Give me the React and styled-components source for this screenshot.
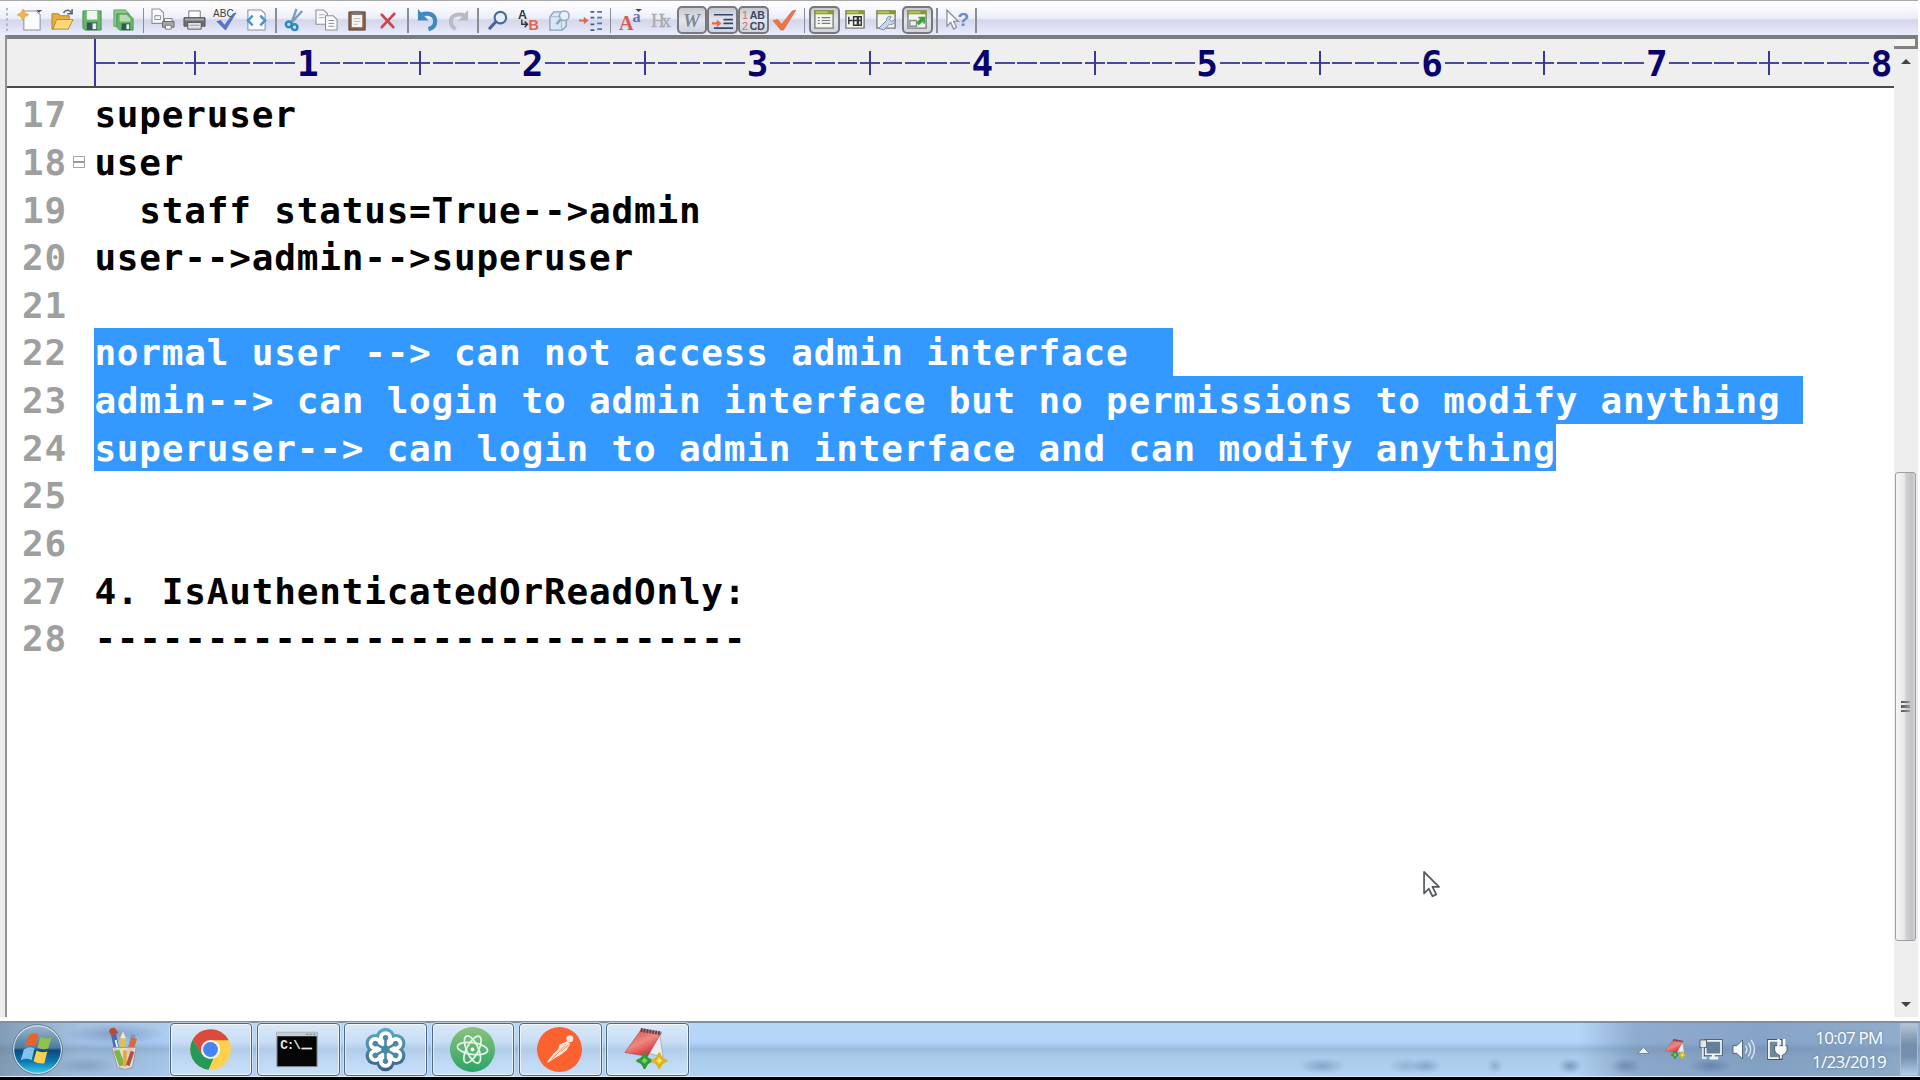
import React from "react";
import styled, { createGlobalStyle, css } from "styled-components";

const MONO = '"DejaVu Sans Mono", "Liberation Mono", monospace';
const CELL = 22.49;
const ROW = 47.67;

const GlobalStyle = createGlobalStyle`
  * { box-sizing: border-box; }
  html, body { margin: 0; padding: 0; overflow: hidden; background: #fff; }
`;

const Screen = styled.div`
  width: 1920px;
  height: 1080px;
  display: flex;
  flex-direction: column;
  background: #fff;
  overflow: hidden;
  cursor: default;
`;

/* ---------- toolbar ---------- */

const Toolbar = styled.div`
  flex: none;
  height: 35px;
  width: 1918px;
  display: flex;
  align-items: center;
  padding: 4px 0 0 5px;
  border-top: 1px solid #a9a9a9;
  background: linear-gradient(#fdfdfe 0, #fbfbfe 15%, #eceffa 50%, #d3d7e9 56%, #dadef0 72%, #e9ecfa 100%);
`;

const Grip = styled.div`
  width: 4px;
  height: 26px;
  margin-right: 6.6px;
  background: radial-gradient(circle at 2px 2px, #b4b6c2 1.1px, transparent 1.5px) 0 0 / 4px 5.2px;
`;

const ToolButton = styled.div`
  width: 30.96px;
  height: 28px;
  flex: none;
  display: flex;
  align-items: center;
  justify-content: center;
  border-radius: 5px;
  ${(p) =>
    p.$pressed &&
    css`
      border: 2px solid #77797f;
      background: linear-gradient(#c7c9d1, #e3e5ee 50%, #d0d3df);
    `}
  svg { width: 23px; height: 23px; flex: none; overflow: visible; }
`;

const ToolSeparator = styled.div`
  flex: none;
  width: 1.6px;
  height: 25px;
  margin: 0 3.4px;
  background: #8c8e96;
`;

/* ---------- editor ---------- */

const Editor = styled.div`
  flex: none;
  height: 982px;
  display: flex;
`;

const LeftEdge = styled.div`
  width: 7px;
  flex: none;
  border-right: 2.4px solid #929292;
  background: #ededed;
`;

const Document = styled.div`
  width: 1887px;
  flex: none;
  display: flex;
  flex-direction: column;
  border-top: 4px solid #7c7c7c;
`;

const Ruler = styled.div`
  flex: none;
  height: 49px;
  display: flex;
  align-items: stretch;
  background: #efefef;
  border-bottom: 2px solid #4b4b4b;
  overflow: hidden;
`;

const RulerMargin = styled.div`
  width: 86.6px;
  flex: none;
`;

const RulerScale = styled.div`
  display: flex;
  border-left: 2px solid #3a389c;
`;

const RulerCell = styled.div`
  width: ${CELL}px;
  flex: none;
  display: flex;
  align-items: center;
  justify-content: center;
  margin-left: ${(p) => (p.$first ? "-1.4px" : "0")};
  font: bold 36px/47px ${MONO};
  color: #08006c;
`;

const Digit = styled.span`
  padding-top: 2px;
`;

const Dash = styled.div`
  width: 19.8px;
  height: 2px;
  margin-top: 1px;
  display: flex;
  justify-content: center;
  align-items: center;
  background: #4a48a0;
`;

const Tick = styled.div`
  width: 2px;
  height: 24px;
  flex: none;
  background: #3a389c;
`;

const Lines = styled.div`
  padding-top: 2.2px;
`;

const Line = styled.div`
  height: ${ROW}px;
  display: flex;
  align-items: stretch;
  font: bold 36px/50px ${MONO};
  letter-spacing: 0.807px;
  white-space: pre;
  color: #000;
`;

const LineNumber = styled.div`
  width: 63px;
  flex: none;
  padding-left: 15px;
  color: #9f9f9f;
`;

const FoldSlot = styled.div`
  width: 24.4px;
  flex: none;
  padding: 18px 0 0 2.5px;
`;

const FoldBox = styled.div`
  width: 12.5px;
  height: 12.5px;
  border: 1.3px solid #a5a5a5;
  display: flex;
  align-items: center;
  &::before { content: ""; width: 100%; height: 1.3px; background: #999; }
`;

const Code = styled.div`
  ${(p) => p.$selected && css`background: #3399ff; color: #fff;`}
`;

/* ---------- scrollbar ---------- */

const Scrollbar = styled.div`
  width: 24px;
  flex: none;
  display: flex;
  flex-direction: column;
  align-items: center;
  background: #eeeeee;
`;

const SplitHandle = styled.div`
  width: 24px;
  height: 14px;
  flex: none;
  border-top: 4px solid #7c7c7c;
  border-right: 3px solid #828282;
  border-bottom: 3px solid #828282;
  background: #f4f4f4;
`;

const Arrow = styled.div`
  flex: none;
  width: 0;
  height: 0;
  border-left: 5px solid transparent;
  border-right: 5px solid transparent;
  ${(p) => (p.$down ? "border-top: 5px solid #444; margin-top: auto; margin-bottom: 10px;" : "border-bottom: 5px solid #444; margin-top: 10px;")}
`;

const Thumb = styled.div`
  width: 21px;
  height: 469px;
  margin: 408px 2px 0 0;
  flex: none;
  display: flex;
  flex-direction: column;
  align-items: center;
  justify-content: center;
  gap: 2px;
  border: 1.5px solid #a0a0a2;
  border-radius: 3px;
  background: linear-gradient(90deg, #f6f6f6, #e9e9ea 42%, #cfcfd2 55%, #c3c3c7 85%, #d5d5d8);
`;

const GripLine = styled.div`
  width: 9px;
  height: 2.4px;
  background: linear-gradient(90deg, #555, #999);
`;

/* ---------- taskbar ---------- */

const smudge = (x, w, a) => `radial-gradient(ellipse ${w}px 8px at ${x}px 43px, rgba(50,75,120,${a}), transparent)`;

const Taskbar = styled.div`
  flex: none;
  height: 56px;
  margin-top: 4px;
  display: flex;
  align-items: stretch;
  border-top: 2px solid #7f90a5;
  border-bottom: 1px solid #dcebf8;
  background:
    ${smudge(1322, 24, 0.32)}, ${smudge(1426, 15, 0.32)}, ${smudge(1406, 18, 0.22)}, ${smudge(1495, 8, 0.25)},
    ${smudge(1570, 12, 0.4)}, ${smudge(1625, 15, 0.35)}, ${smudge(1711, 22, 0.35)},
    radial-gradient(ellipse 50px 10px at 115px 11px, rgba(60,85,125,0.3), transparent),
    radial-gradient(ellipse 30px 9px at 86px 43px, rgba(60,85,125,0.25), transparent),
    linear-gradient(90deg, rgba(80,100,115,.5) 0, rgba(80,100,130,.18) 80px, rgba(80,110,150,.16) 140px, transparent 200px, transparent 1578px, rgba(83,110,145,.4) 1635px, rgba(88,115,152,.5) 1760px, rgba(100,125,150,.45) 1920px),
    linear-gradient(#b8d6f5 0, #b4d5fb 36%, #9cbcde 49%, #abcaea 62%, #b1d2f3 100%);
`;

const BottomEdge = styled.div`
  flex: none;
  height: 3px;
  background: #000;
`;

const StartSlot = styled.div`
  width: 75px;
  flex: none;
  display: flex;
  align-items: center;
  justify-content: center;
  svg { width: 51px; height: 51px; }
`;

const PinnedSlot = styled.div`
  width: 94.8px;
  flex: none;
  display: flex;
  align-items: center;
  justify-content: center;
  padding: 0 0 2px 3px;
  svg { width: 32px; height: 45px; overflow: visible; }
`;

const TaskList = styled.div`
  display: flex;
  gap: 4.7px;
`;

const TaskButton = styled.div`
  width: 82.6px;
  display: flex;
  align-items: center;
  justify-content: center;
  padding-right: 1px;
  border: 1.6px solid #4f6780;
  border-radius: 4px;
  background: linear-gradient(#dae9f8 0, #c8ddf5 35%, #b1cce9 50%, #bcd6f2 68%, #c8e0fa);
  box-shadow: inset 0 0 0 1px rgba(255, 255, 255, 0.65), 0 0 0 1px rgba(225, 238, 250, 0.6);
  svg { width: 47px; height: 47px; overflow: visible; }
`;

const Tray = styled.div`
  margin-left: auto;
  display: flex;
  align-items: center;
`;

const TrayIcon = styled.div`
  width: 33.5px;
  display: flex;
  justify-content: center;
  svg { width: 23px; height: 23px; overflow: visible; }
`;

const Clock = styled.div`
  width: 106px;
  padding: 1px 0 0 4px;
  text-align: center;
  font: 17px/24px "Open Sans", "Noto Sans", sans-serif;
  letter-spacing: -0.75px;
  color: #fff;
  text-shadow: 0 0 3px rgba(60, 85, 120, 0.5);
`;

const ShowDesktop = styled.div`
  width: 18px;
  align-self: stretch;
  margin-right: 2px;
  border: 1.5px solid #a9bed5;
  background: linear-gradient(#b4c5d8, #768ea9 40%, #7690b0 65%, #b4cdea);
`;

const Pointer = styled.svg`
  position: absolute;
  left: 1422px;
  top: 870px;
  width: 21px;
  height: 30px;
`;

/* ---------- toolbar drawings ---------- */

const Sheet = ({ x = 4, y = 2, w = 16, h = 20, fold = 4 }) => (
  <path d={`M${x} ${y}h${w - fold}l${fold} ${fold}v${h - fold}h${-w}z`} fill="#fafbfd" stroke="#8d9199" strokeWidth="1.1" />
);

const Floppy = ({ x = 0, y = 0, s = 1 }) => (
  <g transform={`translate(${x} ${y}) scale(${s})`}>
    <path d="M2 2h19v20H4l-2-2z" fill="#68b56a" stroke="#4a9558" />
    <path d="M6 2h11v9H6z" fill="#eef6ee" />
    <path d="M6 14h11v8H6z" fill="#2d5a54" />
    <path d="M12 15h4v6h-4z" fill="#e4efe6" />
  </g>
);

const WindowFrame = ({ children }) => (
  <g>
    <path d="M2 2h19v18H2z" fill="#f4f5f1" stroke="#787c76" strokeWidth="1.4" />
    <path d="M1.5 1.5h20v4h-20z" fill="#8c9a2d" />
    <path d="M3 2.4h12v2H3z" fill="#b9c556" />
    {children}
  </g>
);

const icons = {
  fresh: (
    <svg viewBox="0 0 24 24">
      <Sheet x={4} y={2} w={17} h={20} />
      <path d="M17 1h6l-3 3z" fill="#55585f" />
      <path d="M3 0l2 4 4 2-4 2-2 4-2-4-4-2 4-2z" fill="#f6b24a" stroke="#eea12c" strokeWidth=".8" />
    </svg>
  ),
  open: (
    <svg viewBox="0 0 24 24">
      <path d="M1 5h7l2 2h9v5H6L2 21H1z" fill="#e7ae3e" stroke="#a9823e" />
      <path d="M6 11h17l-5 10H2z" fill="#ffd778" stroke="#b98b32" />
      <path d="M13 4c3-4 7-3 8 0M22 0v5h-5" fill="none" stroke="#586577" strokeWidth="1.6" />
    </svg>
  ),
  save: <svg viewBox="0 0 24 24"><Floppy /></svg>,
  saveAll: (
    <svg viewBox="0 0 24 24">
      <path d="M2 1h12l4 4v13H2z" fill="#8acb88" stroke="#5ea564" />
      <path d="M5 5h12l5 5v12H8l-3-3z" fill="#68b56a" stroke="#4a9558" />
      <path d="M8 6h7l4 4v3H8z" fill="#b5dcb3" />
      <path d="M10 15h9v7h-9z" fill="#2d5a54" />
      <path d="M15 16h3v5h-3z" fill="#e4efe6" />
    </svg>
  ),
  preview: (
    <svg viewBox="0 0 24 24">
      <Sheet x={0} y={0} w={12} h={15} />
      <path d="M3 7h6v4H3z" fill="none" stroke="#888" />
      <path d="M13 10h8v4h-8z" fill="#fff" stroke="#777" />
      <path d="M11 13h12v6H11z" fill="#a3a6ac" stroke="#66696e" />
      <path d="M14 17h6v4h-6z" fill="#fff" stroke="#777" />
    </svg>
  ),
  print: (
    <svg viewBox="0 0 24 24">
      <path d="M6 2h12v8H6z" fill="#fafafa" stroke="#777" />
      <path d="M1 9h22v9H1z" fill="#6a6d72" stroke="#55585c" />
      <path d="M2 10h20v2H2z" fill="#a8abb0" />
      <path d="M5 14h14v7H5z" fill="#dfe1e6" stroke="#555" />
      <path d="M7 17h10" stroke="#999" />
    </svg>
  ),
  spell: (
    <svg viewBox="0 0 24 24">
      <text x="-1" y="8" fontFamily="Liberation Sans, sans-serif" fontSize="10.500" fill="#3c3c44">ABC</text>
      <path d="M3 13l4-1 4 5L20 5l3-1-11 18z" fill="#5876c5" stroke="#4059a8" strokeWidth=".6" />
    </svg>
  ),
  html: (
    <svg viewBox="0 0 24 24">
      <Sheet x={3} y={1} w={18} h={21} />
      <path d="M8 7l-5 5 5 5M16 7l5 5-5 5" fill="none" stroke="#4e94cc" strokeWidth="2.6" />
    </svg>
  ),
  cut: (
    <svg viewBox="0 0 24 24">
      <path d="M13 0L8 14M19 2L7 15" stroke="#7b9cb8" strokeWidth="2.4" />
      <circle cx="5" cy="16" r="3" fill="none" stroke="#2b8cc4" strokeWidth="2.6" />
      <circle cx="11" cy="19" r="3" fill="none" stroke="#2b8cc4" strokeWidth="2.6" />
    </svg>
  ),
  copy: (
    <svg viewBox="0 0 24 24">
      <Sheet x={1} y={1} w={12} h={15} />
      <path d="M4 6h6M4 9h6" stroke="#aaa" />
      <Sheet x={11} y={7} w={12} h={15} />
      <path d="M14 12h6M14 15h6M14 18h6" stroke="#8a8d94" />
    </svg>
  ),
  paste: (
    <svg viewBox="0 0 24 24">
      <path d="M3 3h17v19H3z" fill="#8b6248" stroke="#5d4333" />
      <path d="M6 6h11v13H6z" fill="#f4f4f2" />
      <path d="M7 2h9v4H7z" fill="#777" />
      <path d="M8 10h7M8 13h7M8 16h4" stroke="#bbb" />
    </svg>
  ),
  remove: <svg viewBox="0 0 24 24"><path d="M5 6l12 13M18 5L5 19" stroke="#c9464c" strokeWidth="2.800" strokeLinecap="round" /></svg>,
  undo: (
    <svg viewBox="0 0 24 24">
      <path d="M5 6c9-3 15 0 15 7 0 4-3 7-7 8" fill="none" stroke="#3c8ac4" strokeWidth="4.4" />
      <path d="M2 0v12h11z" fill="#3c8ac4" />
    </svg>
  ),
  redo: (
    <svg viewBox="0 0 24 24">
      <path d="M19 7C11 4 4 7 4 13c0 4 2 6 5 8" fill="none" stroke="#b8bac4" strokeWidth="4" />
      <path d="M22 1v11H12z" fill="#b8bac4" />
    </svg>
  ),
  find: (
    <svg viewBox="0 0 24 24">
      <circle cx="15" cy="9" r="6" fill="#e4f0fb" stroke="#4a6a9f" strokeWidth="2.2" />
      <path d="M10 13.500L4 20" stroke="#44609a" strokeWidth="3.2" strokeLinecap="round" />
    </svg>
  ),
  replace: (
    <svg viewBox="0 0 24 24">
      <text x="1" y="10" fontFamily="Liberation Sans, sans-serif" fontWeight="bold" fontSize="13" fill="#35373c">A</text>
      <path d="M5 11v5h6M8 13l3 3-3 3" fill="none" stroke="#35373c" strokeWidth="1.5" />
      <text x="12" y="22" fontFamily="Liberation Sans, sans-serif" fontWeight="bold" fontSize="15" fill="#e0664c">B</text>
    </svg>
  ),
  findFiles: (
    <svg viewBox="0 0 24 24">
      <path d="M2 8l4-5h13v15l-4 4H2z" fill="#dbe5f3" stroke="#8aa0c0" strokeWidth="1.400" />
      <path d="M2 8h12v13M14 8l4-4" fill="none" stroke="#a4b6d2" />
      <circle cx="17" cy="7" r="5" fill="#e9f1fb" stroke="#94a9c8" strokeWidth="1.6" />
      <path d="M13 11l-4 5" stroke="#8aa0c0" strokeWidth="2.6" />
    </svg>
  ),
  goTo: (
    <svg viewBox="0 0 24 24">
      <path d="M0 12h7" stroke="#de6a4c" strokeWidth="2" />
      <path d="M5 8l5 4-5 4z" fill="#de6a4c" />
      <path d="M12 3h4M12 9h4M12 16h4M12 22h4" stroke="#4c5d86" strokeWidth="2" />
      <path d="M19 3h5M19 9h5M19 15h5M19 21h5" stroke="#4a76b4" strokeWidth="2" />
    </svg>
  ),
  font: (
    <svg viewBox="0 0 24 24">
      <text x="0" y="22" fontFamily="Liberation Serif, serif" fontWeight="bold" fontSize="21" fill="#d35b5b">A</text>
      <text x="14" y="14" fontFamily="Liberation Serif, serif" fontWeight="bold" fontSize="17" fill="#6a70b8">a</text>
      <path d="M17 0h7l-3.500 3z" fill="#44495c" />
    </svg>
  ),
  hex: (
    <svg viewBox="0 0 24 24">
      <text x="1" y="19" fontFamily="Liberation Serif, serif" fontSize="20" fill="#a9abb3" stroke="#a9abb3" strokeWidth=".4" textLength="21">Hx</text>
    </svg>
  ),
  wrap: (
    <svg viewBox="0 0 24 24">
      <text x="2" y="19" fontFamily="Liberation Serif, serif" fontStyle="italic" fontWeight="bold" fontSize="20" fill="#83868e">W</text>
    </svg>
  ),
  indent: (
    <svg viewBox="0 0 24 24">
      <path d="M3 6h20M13 11h10M13 15h10M3 20h20" stroke="#34456e" strokeWidth="1.800" />
      <path d="M1 15h6" stroke="#ec6a45" strokeWidth="2.4" />
      <path d="M6 11l5 4-5 4z" fill="#ec6a45" />
    </svg>
  ),
  lineNumbers: (
    <svg viewBox="0 0 24 24">
      <g fontFamily="Liberation Sans, sans-serif" fontSize="11.500">
        <text x="0" y="10" fill="#e06b66">1</text>
        <text x="0" y="22" fill="#e06b66">2</text>
        <text x="8" y="10" fontWeight="bold" fontSize="11" fill="#3b4664">AB</text>
        <text x="8" y="22" fontWeight="bold" fontSize="11" fill="#3b4664">CD</text>
      </g>
    </svg>
  ),
  check: <svg viewBox="0 0 24 24"><path d="M0 12l5-1 4 5L20 2l4-1-13 21H8z" fill="#eb7547" stroke="#d96238" strokeWidth=".6" /></svg>,
  winList: (
    <svg viewBox="0 0 24 24">
      <WindowFrame><path d="M5 9h2M5 12h2M5 15h2M9 9h9M9 12h9M9 15h9" stroke="#777a7e" strokeWidth="1.3" /></WindowFrame>
    </svg>
  ),
  winTree: (
    <svg viewBox="0 0 24 24">
      <WindowFrame>
        <path d="M5 8v8M5 12h4M10 8h4v9h-4zM10 12h8M15 8h3v9h-3z" fill="none" stroke="#33363a" strokeWidth="1.500" />
      </WindowFrame>
    </svg>
  ),
  winTool: (
    <svg viewBox="0 0 24 24">
      <WindowFrame>
        <path d="M4 20l8-8c0-4 3-5 5-4l-2 3 2 2 4-2c0 4-3 6-6 5l-6 6z" fill="#c9d6ea" stroke="#7388ae" />
      </WindowFrame>
    </svg>
  ),
  winOut: (
    <svg viewBox="0 0 24 24">
      <WindowFrame>
        <path d="M4 12h7v6H4z" fill="#eee" stroke="#8a8d8f" strokeWidth="1.4" />
        <path d="M11 14l4-4h-2V8h7v7h-2v-2l-5 4z" fill="#3da33d" />
      </WindowFrame>
    </svg>
  ),
  help: (
    <svg viewBox="0 0 24 24">
      <path d="M2 1v17l4-4 3 7 3-2-3-6h5z" fill="#f8f9fc" stroke="#8a909f" strokeWidth="1.3" />
      <text x="13" y="18" fontFamily="Liberation Sans, sans-serif" fontWeight="bold" fontSize="20" fill="#6c87c6">?</text>
    </svg>
  ),
};

const toolGroups = [
  ["fresh", "open", "save", "saveAll"],
  ["preview", "print", "spell", "html"],
  ["cut", "copy", "paste", "remove"],
  ["undo", "redo"],
  ["find", "replace", "findFiles", "goTo"],
  ["font", "hex", "wrap", "indent", "lineNumbers", "check"],
  ["winList", "winTree", "winTool", "winOut"],
  ["help"],
];
const pressed = new Set(["wrap", "indent", "lineNumbers", "winList", "winOut"]);

/* ---------- taskbar drawings ---------- */

const StartOrb = () => (
  <svg viewBox="0 0 52 52">
    <defs>
      <linearGradient id="orb" x1="0" y1="0" x2="0" y2="1">
        <stop offset="0" stopColor="#9db7c9" />
        <stop offset=".46" stopColor="#4d7da0" />
        <stop offset=".52" stopColor="#0d4a7c" />
        <stop offset=".75" stopColor="#0d78b0" />
        <stop offset="1" stopColor="#35d0f2" />
      </linearGradient>
    </defs>
    <circle cx="26" cy="26" r="24.500" fill="url(#orb)" stroke="#d3e4ef" strokeWidth="1.4" />
    <circle cx="26" cy="26" r="25.400" fill="none" stroke="#4f6c88" strokeWidth=".8" />
    <path d="M17 12q5-4 10-1l-3 12q-6-3-11 1z" fill="#e8622c" />
    <path d="M29 13q5 3 11 1l-3 11q-6 2-11-1z" fill="#8fc24c" />
    <path d="M12 26q6-4 11-1l-3 12q-5-3-11 0z" fill="#7cc3ee" />
    <path d="M25 27q5 3 11 1l-3 12q-6 1-11-2z" fill="#f9cf4d" />
  </svg>
);

const PencilCup = () => (
  <svg viewBox="0 0 34 46">
    <path d="M10 28L6 8" stroke="#4869b8" strokeWidth="5.500" />
    <path d="M1 5q1-5 6-4l4 5-7 4z" fill="#b94c36" />
    <path d="M16 30V12" stroke="#dcc24a" strokeWidth="6" />
    <path d="M13 12l3-7 3 7z" fill="#f5ead0" />
    <path d="M22 30l5-22" stroke="#7d9cc8" strokeWidth="5" />
    <path d="M22 30l6-18" stroke="#d9693a" strokeWidth="6" />
    <path d="M12 30l-4-16" stroke="#f1f3f6" strokeWidth="2" />
    <path d="M4 22h26l-4 21q-8 4-16 0z" fill="#e7e9e4" fillOpacity=".75" stroke="#a59aa0" strokeWidth="1.2" />
    <path d="M9 25l6 16" stroke="#7eb43f" strokeWidth="6" />
    <path d="M18 25v17" stroke="#e9a83c" strokeWidth="4" />
    <path d="M26 26l-5 15" stroke="#bb4d3f" strokeWidth="4" />
  </svg>
);

const Chrome = () => (
  <svg viewBox="0 0 48 48">
    <circle cx="24" cy="24" r="20.800" fill="#fdd14c" />
    <path d="M6 13.600L15.400 29 27 33 22 44.700A20.800 20.800 0 0 1 6 13.600z" fill="#23995a" />
    <path d="M6 13.600A20.800 20.800 0 0 1 42.500 14.500H24L15 29z" fill="#db4a3c" />
    <circle cx="24" cy="24" r="9.800" fill="#f3f5f8" />
    <circle cx="24" cy="24" r="7.600" fill="#4684ee" />
  </svg>
);

const Terminal = () => (
  <svg viewBox="0 0 48 48">
    <path d="M3 6.500h41v35H3z" fill="#050505" stroke="#8f959c" />
    <path d="M3 6.500h41v4H3z" fill="#c5cbd2" />
    <path d="M33 8.500h9" stroke="#6e747c" strokeDasharray="2 1.500" />
    <text x="6.500" y="23.500" fontFamily="Liberation Mono, monospace" fontWeight="bold" fontSize="13" letterSpacing="-1.2" fill="#e8e8e8">C:\</text>
    <path d="M28 23h11" stroke="#e8e8e8" strokeWidth="1.800" />
  </svg>
);

const petals = [0, 60, 120, 180, 240, 300];
const Flower = () => (
  <svg viewBox="0 0 48 48">
    <defs>
      <linearGradient id="petal" gradientUnits="userSpaceOnUse" x1="0" y1="2" x2="0" y2="46">
        <stop offset="0" stopColor="#5aacc2" />
        <stop offset="1" stopColor="#3a608c" />
      </linearGradient>
    </defs>
    <g fill="url(#petal)">
      <circle cx="24" cy="11.500" r="9.600" />
      <circle cx="24" cy="36.500" r="9.600" />
      <circle cx="13.200" cy="17.800" r="9.600" />
      <circle cx="34.800" cy="17.800" r="9.600" />
      <circle cx="13.200" cy="30.200" r="9.600" />
      <circle cx="34.800" cy="30.200" r="9.600" />
      <circle cx="24" cy="24" r="17" />
    </g>
    <g fill="#fff">
      {petals.map((a) => <circle key={a} cx="24" cy="12" r="6.700" transform={`rotate(${a} 24 24)`} />)}
      <circle cx="24" cy="24" r="11.500" />
    </g>
    <g fill="#4489a8" stroke="#4489a8" strokeWidth="2.600">
      {petals.map((a) => (
        <g key={a} transform={`rotate(${a} 24 24)`}>
          <path d="M24 24V13" />
          <circle cx="24" cy="12" r="2.400" strokeWidth="1" />
        </g>
      ))}
      <circle cx="24" cy="24" r="3" />
    </g>
  </svg>
);

const Atom = () => (
  <svg viewBox="0 0 48 48">
    <defs>
      <linearGradient id="atom" x1="0" y1="0" x2="0" y2="1">
        <stop offset="0" stopColor="#8cc27c" />
        <stop offset="1" stopColor="#2ba465" />
      </linearGradient>
    </defs>
    <circle cx="24" cy="24" r="23" fill="url(#atom)" />
    <g fill="none" stroke="#e3f4e6" strokeWidth="1.800">
      <ellipse cx="24" cy="23" rx="15.500" ry="6" transform="rotate(8 24 23)" />
      <ellipse cx="24" cy="24" rx="15" ry="6" transform="rotate(66 24 24)" />
      <ellipse cx="24" cy="24" rx="15" ry="6" transform="rotate(118 24 24)" />
    </g>
    <circle cx="24" cy="24" r="2" fill="#fff" />
  </svg>
);

const Postman = () => (
  <svg viewBox="0 0 48 48">
    <circle cx="24" cy="24" r="23" fill="#fc622f" />
    <g fill="#fbe4da">
      <circle cx="34.500" cy="13" r="3.600" />
      <path d="M32 15.500l3 2.500-3.500 6.500-5 4-9 5.500L12 37.500l-.6-1 6-8 5-4.500 1.600-5z" />
    </g>
    <path d="M31 18l-7 8M33 19l-7 7M24 26l-8 8" stroke="#fc8a63" strokeWidth="1" fill="none" />
  </svg>
);

const Notepad = () => (
  <svg viewBox="0 0 48 48">
    <defs>
      <linearGradient id="pad" x1="0" y1="0" x2=".6" y2="1">
        <stop offset="0" stopColor="#c04a4a" />
        <stop offset=".55" stopColor="#ef8982" />
        <stop offset="1" stopColor="#cf2d32" />
      </linearGradient>
    </defs>
    <path d="M36 5l4 27-14-4z" fill="#e9edf2" stroke="#9aa6b4" strokeWidth=".8" />
    <path d="M18 3l20 4-14 24L1 27z" fill="url(#pad)" stroke="#b5383b" strokeWidth=".6" />
    <path d="M17 4l21 3.500" stroke="#5c4248" strokeWidth="4" strokeDasharray="2 1" />
    <path d="M21 28.500q1.500 5.500 7 7-5.500 1.500-7 7-1.500-5.500-7-7 5.500-1.500 7-7z" fill="#6fdc66" stroke="#2f9a37" strokeWidth="3" strokeLinejoin="round" />
    <path d="M36 28.500q1.500 5.500 7 7-5.500 1.500-7 7-1.500-5.500-7-7 5.500-1.500 7-7z" fill="#ffe94a" stroke="#dcb228" strokeWidth="3" strokeLinejoin="round" />
  </svg>
);

const NetworkIcon = () => (
  <svg viewBox="0 0 24 24">
    <path d="M7 3h16v14H7z" fill="#63809b" stroke="#3d5166" strokeWidth="3.400" />
    <path d="M7 3h16v14H7z" fill="#63809b" stroke="#f2f5f8" strokeWidth="1.800" />
    <path d="M11 21h9M15 17v4" stroke="#f2f5f8" strokeWidth="3" />
    <path d="M1 2h7v8H1z" fill="#dfe5ea" stroke="#4b5c6d" />
    <path d="M4 10v11h4" fill="none" stroke="#e9eef2" strokeWidth="1.600" />
  </svg>
);

const SpeakerIcon = () => (
  <svg viewBox="0 0 24 24">
    <path d="M1 8h4l6-6v20l-6-6H1z" fill="#f8fafc" stroke="#4c6074" />
    <path d="M14 8q3 4 0 8M17 5q5 7 0 14M20 2q7 10 0 20" fill="none" stroke="#dce6f0" strokeWidth="1.500" />
  </svg>
);

const PowerIcon = () => (
  <svg viewBox="0 0 24 24">
    <path d="M3 3h12v18H3z" fill="#70879d" stroke="#41566b" strokeWidth="3.800" />
    <path d="M3 3h12v18H3z" fill="#70879d" stroke="#f2f5f8" strokeWidth="2" />
    <path d="M9 8h13v5q-2 5-5 5v4h-3v-4q-4-1-5-5z" fill="#fafbfc" stroke="#41566b" />
    <path d="M13 1v8M19 1v8" stroke="#f8fafc" strokeWidth="2.400" />
  </svg>
);

const TrayArrow = () => (
  <svg viewBox="0 0 24 24"><path d="M6 16l6-6 6 6z" fill="#fff" stroke="#58708c" strokeWidth=".8" /></svg>
);

/* ---------- content ---------- */

const lines = [
  { n: 17, text: "superuser" },
  { n: 18, text: "user", fold: true },
  { n: 19, text: "  staff status=True-->admin" },
  { n: 20, text: "user-->admin-->superuser" },
  { n: 21, text: "" },
  { n: 22, text: "normal user --> can not access admin interface  ", selected: true },
  { n: 23, text: "admin--> can login to admin interface but no permissions to modify anything ", selected: true },
  { n: 24, text: "superuser--> can login to admin interface and can modify anything", selected: true },
  { n: 25, text: "" },
  { n: 26, text: "" },
  { n: 27, text: "4. IsAuthenticatedOrReadOnly:" },
  { n: 28, text: "-----------------------------" },
];

const rulerCells = Array.from({ length: 80 }, (_, i) => {
  const column = i + 1;
  if (column % 10 === 0) return String(column / 10);
  return column % 5 === 0 ? "+" : "-";
});

export default function App() {
  return (
    <Screen>
      <GlobalStyle />
      <Toolbar>
        <Grip />
        {toolGroups.map((group, i) => (
          <React.Fragment key={i}>
            {group.map((name) => (
              <ToolButton key={name} $pressed={pressed.has(name)}>{icons[name]}</ToolButton>
            ))}
            <ToolSeparator />
          </React.Fragment>
        ))}
      </Toolbar>

      <Editor>
        <LeftEdge />
        <Document>
          <Ruler>
            <RulerMargin />
            <RulerScale>
              {rulerCells.map((c, i) => (
                <RulerCell key={i} $first={i === 0}>
                  {c === "-" || c === "+" ? <Dash>{c === "+" && <Tick />}</Dash> : <Digit>{c}</Digit>}
                </RulerCell>
              ))}
            </RulerScale>
          </Ruler>
          <Lines>
            {lines.map((l) => (
              <Line key={l.n}>
                <LineNumber>{l.n}</LineNumber>
                <FoldSlot>{l.fold && <FoldBox />}</FoldSlot>
                <Code $selected={l.selected}>{l.text}</Code>
              </Line>
            ))}
          </Lines>
        </Document>
        <Scrollbar>
          <SplitHandle />
          <Arrow />
          <Thumb><GripLine /><GripLine /><GripLine /></Thumb>
          <Arrow $down />
        </Scrollbar>
      </Editor>

      <Taskbar>
        <StartSlot><StartOrb /></StartSlot>
        <PinnedSlot><PencilCup /></PinnedSlot>
        <TaskList>
          <TaskButton><Chrome /></TaskButton>
          <TaskButton><Terminal /></TaskButton>
          <TaskButton><Flower /></TaskButton>
          <TaskButton><Atom /></TaskButton>
          <TaskButton><Postman /></TaskButton>
          <TaskButton><Notepad /></TaskButton>
        </TaskList>
        <Tray>
          <TrayIcon><TrayArrow /></TrayIcon>
          <TrayIcon><Notepad /></TrayIcon>
          <TrayIcon><NetworkIcon /></TrayIcon>
          <TrayIcon><SpeakerIcon /></TrayIcon>
          <TrayIcon><PowerIcon /></TrayIcon>
          <Clock>
            <div>10:07 PM</div>
            <div>1/23/2019</div>
          </Clock>
          <ShowDesktop />
        </Tray>
      </Taskbar>
      <BottomEdge />

      <Pointer viewBox="0 0 22 32">
        <path d="M2 2v23l5-5 4 8 4-2-4-8h7z" fill="#fafafa" stroke="#55585c" strokeWidth="1.800" strokeLinejoin="round" />
      </Pointer>
    </Screen>
  );
}
